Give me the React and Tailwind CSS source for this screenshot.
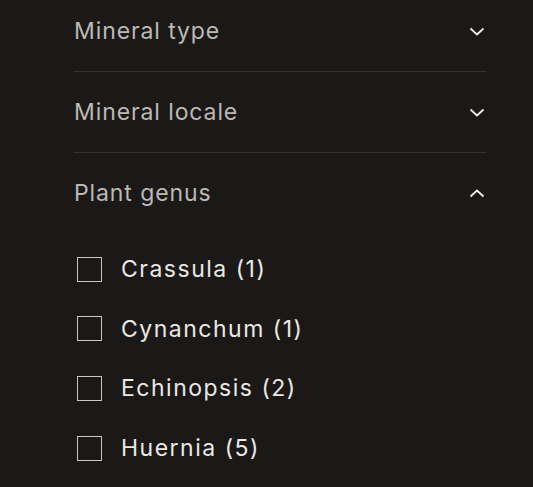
const sections = [
  { title: 'Mineral type', open: false },
  { title: 'Mineral locale', open: false },
  { title: 'Plant genus', open: true },
];

const genera = [
  { name: 'Crassula', count: 1 },
  { name: 'Cynanchum', count: 1 },
  { name: 'Echinopsis', count: 2 },
  { name: 'Huernia', count: 5 },
];

function Chevron({ open }) {
  return (
    <svg width="16" height="9" viewBox="0 0 16 9" fill="none" className="mr-[1px]">
      {open ? (
        <path d="M1.5 7.5L8 1.5L14.5 7.5" stroke="#f2f0ec" strokeWidth="1.8" />
      ) : (
        <path d="M1.5 1.5L8 7.5L14.5 1.5" stroke="#f2f0ec" strokeWidth="1.8" />
      )}
    </svg>
  );
}

export default function App() {
  return (
    <div
      className="w-[533px] h-[487px] overflow-hidden bg-[#1a1918]"
      style={{ fontFamily: 'Inter, "Noto Sans", sans-serif' }}
    >
      <div className="mx-[74px] w-[412px] -mt-[9px]">
        {sections.map((s) => (
          <div key={s.title} className={s.open ? '' : 'border-b border-[#343230]'}>
            <button type="button" className="w-full h-[80px] flex items-center justify-between text-left">
              <span className="text-[23px] tracking-[0.9px] text-[#bcb9b3]">{s.title}</span>
              <Chevron open={s.open} />
            </button>
            {s.open && (
              <ul className="pt-[24px] flex flex-col gap-[35.8px]">
                {genera.map((g) => (
                  <li key={g.name} className="flex items-center h-[24px]">
                    <span className="w-[25px] h-[25px] ml-[3px] border border-[#c9c6c0] shrink-0" />
                    <span className="ml-[19px] text-[23px] tracking-[1.5px] text-[#ebe8e2]">
                      {g.name} ({g.count})
                    </span>
                  </li>
                ))}
              </ul>
            )}
          </div>
        ))}
      </div>
    </div>
  );
}
